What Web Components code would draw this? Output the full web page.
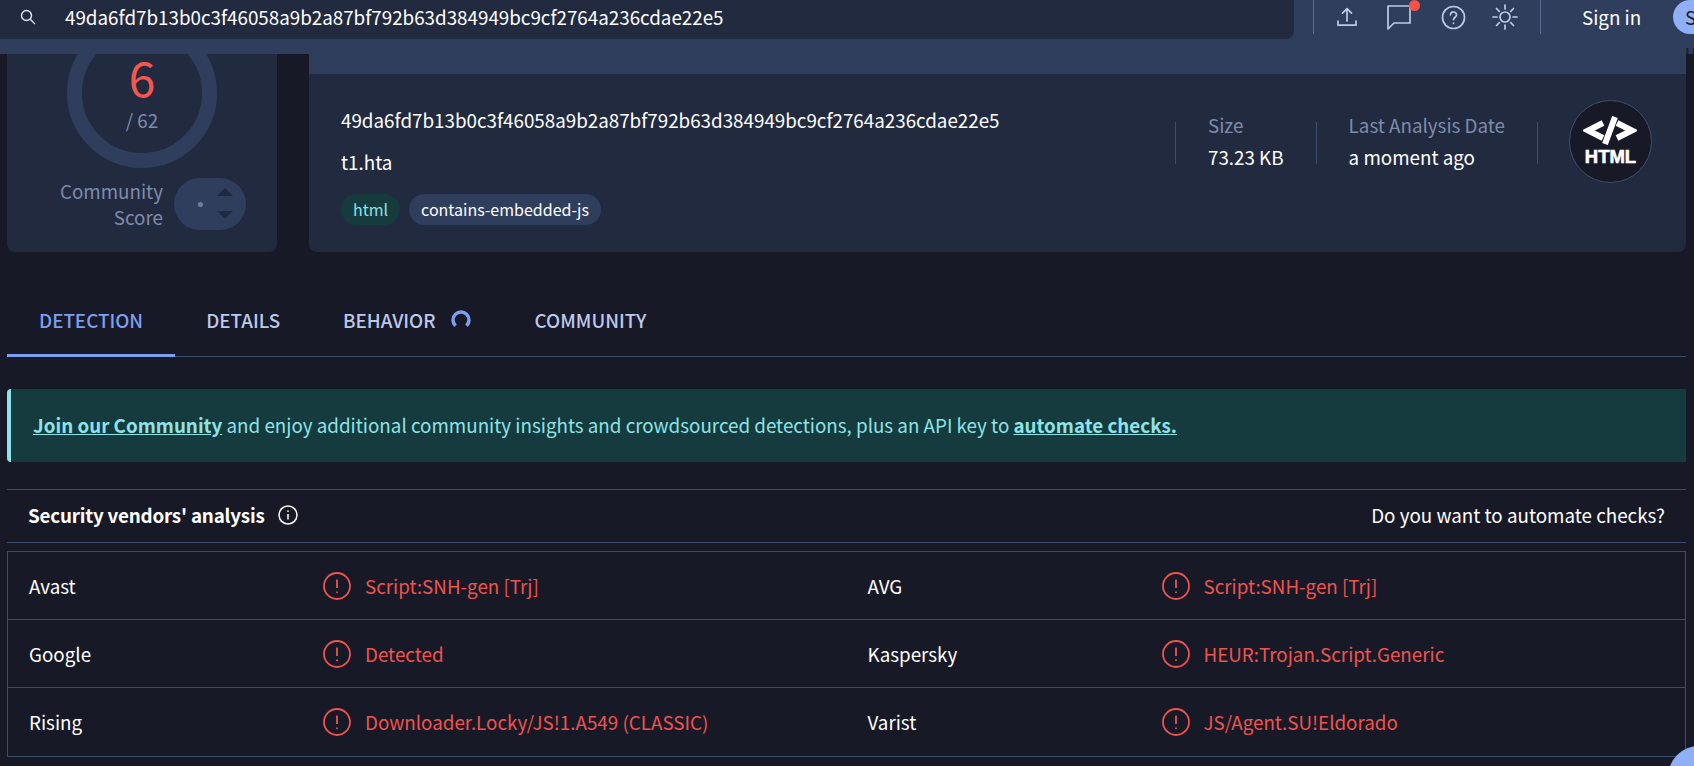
<!DOCTYPE html>
<html>
<head>
<meta charset="utf-8">
<title>VirusTotal</title>
<style>
    html, body {
        margin: 0;
        height: 766px;
        overflow: hidden;
        background: #181926;
        color: #fff;
        font-family: "Noto Sans CJK SC", "Noto Sans", sans-serif;
        font-size: 18.8px;
        line-height: 24px;
    }
    main {
        display: block;
        padding: 0 8px 0 7px;
    }
</style>
</head>
<body>
<vt-header hash="49da6fd7b13b0c3f46058a9b2a87bf792b63d384949bc9cf2764a236cdae22e5"></vt-header>
<main>
    <vt-summary>
        <vt-score slot="score" positives="6" total="62"></vt-score>
        <vt-file slot="file" hash="49da6fd7b13b0c3f46058a9b2a87bf792b63d384949bc9cf2764a236cdae22e5" name="t1.hta">
            <vt-tag kind="type">html</vt-tag>
            <vt-tag>contains-embedded-js</vt-tag>
        </vt-file>
    </vt-summary>
    <vt-tabs></vt-tabs>
    <vt-banner>
        <a href="#">Join our Community</a> and enjoy additional community insights and crowdsourced detections, plus an API key to <a href="#">automate checks.</a>
    </vt-banner>
    <vt-vendors>
        <vt-row>
            <vt-cell vendor="Avast">Script:SNH-gen [Trj]</vt-cell>
            <vt-cell vendor="AVG">Script:SNH-gen [Trj]</vt-cell>
        </vt-row>
        <vt-row>
            <vt-cell vendor="Google">Detected</vt-cell>
            <vt-cell vendor="Kaspersky">HEUR:Trojan.Script.Generic</vt-cell>
        </vt-row>
        <vt-row>
            <vt-cell vendor="Rising">Downloader.Locky/JS!1.A549 (CLASSIC)</vt-cell>
            <vt-cell vendor="Varist">JS/Agent.SU!Eldorado</vt-cell>
        </vt-row>
    </vt-vendors>
</main>
<vt-fab></vt-fab>

<script>
class VtHeader extends HTMLElement {
    constructor() {
        super()
        this.attachShadow({mode: 'open'}).innerHTML = `
<style>
    :host { display: flex; height: 54px; background: #2f3e5c; align-items: flex-start; overflow: hidden; }
    .search {
        width: 1294px; height: 39px; box-sizing: border-box; flex: none;
        background: #222a40; border-radius: 0 0 8px 0;
        display: flex; align-items: center; padding: 0 0 6px 19px;
    }
    .search svg { margin-right: 28px; }
    .sep { width: 1px; height: 34px; background: #5a6a8f; flex: none; }
    .icons { display: flex; align-items: center; height: 34px; margin-left: 21px; width: 205px; gap: 27px; flex: none; }
    .icons svg { fill: none; stroke: #bccae8; stroke-width: 1.7; flex: none; stroke-linecap: round; stroke-linejoin: round; }
    .icons svg.sun { margin-left: -2px; }
    .sign { margin-left: 41px; width: 91px; height: 33px; line-height: 33px; flex: none; }
    .join {
        width: 60px; height: 34px; flex: none; box-sizing: border-box; padding-left: 12px;
        background: #8fb0f7; color: #181926; border-radius: 17px 0 0 17px; line-height: 34px;
    }
    .badge { position: relative; display: flex; }
    .dot { position: absolute; top: -3px; right: -6px; width: 11px; height: 11px; border-radius: 50%; background: #f4524b; }
</style>
<div class="search">
    <svg width="18" height="18" viewBox="0 0 18 18" fill="none" stroke="#dfe6f5" stroke-width="1.4"><circle cx="7.5" cy="7.5" r="5"/><path d="M11.3 11.3l4.6 4.6"/></svg>
    <span id="hash"></span>
</div>
<div class="sep" style="margin-left:19px"></div>
<div class="icons">
    <svg width="24" height="24" viewBox="0 0 24 24"><path d="M12 16V4M7.5 8.2L12 3.6l4.500 4.600M3 16v4.200h18V16"/></svg>
    <span class="badge">
        <svg width="28" height="28" viewBox="0 0 28 28"><path d="M2 26V3h22v17H8z"/></svg>
        <span class="dot"></span>
    </span>
    <svg width="25" height="25" viewBox="0 0 25 25"><circle cx="12.500" cy="12.500" r="11"/><path d="M9.500 9.800c.3-4 6.200-3.600 6 .2-.1 2.200-3 2.300-3 4.600"/><path d="M12.500 18v.3"/></svg>
    <svg class="sun" width="28" height="28" viewBox="0 0 28 28"><circle cx="14" cy="14" r="5"/><path d="M14 2v4M14 22v4M2 14h4M22 14h4M5.500 5.500l2.800 2.800M19.700 19.700l2.800 2.800M5.500 22.500l2.800-2.800M19.700 8.300l2.800-2.800"/></svg>
</div>
<div class="sep"></div>
<div class="sign">Sign in</div>
<div class="join">Sign up</div>
`
        this.shadowRoot.getElementById('hash').textContent = this.getAttribute('hash')
    }
}

class VtSummary extends HTMLElement {
    constructor() {
        super()
        this.attachShadow({mode: 'open'}).innerHTML = `
<style>
    :host { display: flex; gap: 32px; height: 198px; }
    ::slotted([slot=score]) { width: 270px; flex: none; }
    ::slotted([slot=file]) { flex: 1; }
</style>
<slot name="score"></slot>
<slot name="file"></slot>
`
    }
}

class VtScore extends HTMLElement {
    constructor() {
        super()
        this.attachShadow({mode: 'open'}).innerHTML = `
<style>
    :host {
        display: block; height: 198px; overflow: hidden; background: #222a40;
        border-radius: 0 0 8px 8px; box-sizing: border-box;
    }
    .gauge {
        width: 150px; height: 150px; box-sizing: border-box; border: 15px solid #2f3e5c; border-radius: 50%;
        margin: -36px 0 0 60px; text-align: center;
    }
    .pos { color: #f4574d; font-size: 48px; line-height: 40px; margin-top: 23px; }
    .total { color: #7d8cab; line-height: 24px; margin-top: 12px; }
    .community { display: flex; gap: 11px; margin-top: 10px; align-items: center; }
    .label { width: 156px; text-align: right; color: #7d8cab; line-height: 26px; padding: 0 0 0 20px; box-sizing: border-box; }
    .pill {
        width: 72px; height: 52px; border-radius: 26px; background: #2f3e5c; position: relative; flex: none;
    }
    .pill i { position: absolute; left: 24px; top: 24px; width: 5px; height: 5px; border-radius: 50%; background: #6f7e9e; }
    .pill svg { position: absolute; left: 43px; top: 10px; }
</style>
<div class="gauge">
    <div class="pos" id="pos"></div>
    <div class="total" id="total"></div>
</div>
<div class="community">
    <div class="label">Community Score</div>
    <div class="pill"><i></i>
        <svg width="16" height="32" viewBox="0 0 16 32" fill="#1f2a42"><path d="M8 0l8 8H0zM0 23h16l-8 8z"/></svg>
    </div>
</div>
`
        this.shadowRoot.getElementById('pos').textContent = this.getAttribute('positives')
        this.shadowRoot.getElementById('total').textContent = '/ ' + this.getAttribute('total')
    }
}

class VtFile extends HTMLElement {
    constructor() {
        super()
        this.attachShadow({mode: 'open'}).innerHTML = `
<style>
    :host { display: block; height: 198px; }
    .strip { height: 20px; background: #2f3e5c; }
    .body {
        height: 178px; background: #222a40; border-radius: 0 0 8px 8px; box-sizing: border-box;
        display: flex; align-items: flex-start; padding: 34px 0 0 32px;
    }
    .info { width: 834px; flex: none; }
    .name { margin-top: 18px; }
    .tags { display: flex; gap: 9px; margin-top: 20px; }
    .sep { width: 1px; height: 42px; background: #3f4d6c; flex: none; margin-top: 14px; }
    .stat { flex: none; margin-top: 5px; padding: 0 32px; }
    .stat b { display: block; font-weight: 400; color: #7d8cab; }
    .stat span { display: block; margin-top: 8px; }
    .logo {
        width: 83px; height: 83px; border-radius: 50%; background: #181926; border: 1px solid #3f4d6c;
        box-sizing: border-box; margin: -8px 0 0 31px; flex: none; text-align: center;
    }
    .logo svg { display: block; margin: 15px auto 0; fill: none; stroke: #fff; stroke-width: 6; }
    .logo span { display: block; font: 700 18.500px/17px "Liberation Sans", sans-serif; margin-top: 3px; -webkit-text-stroke: .6px #fff; }
</style>
<div class="strip"></div>
<div class="body">
    <div class="info">
        <div class="hash" id="hash"></div>
        <div class="name" id="name"></div>
        <div class="tags"><slot></slot></div>
    </div>
    <div class="sep"></div>
    <div class="stat"><b>Size</b><span>73.23 KB</span></div>
    <div class="sep"></div>
    <div class="stat"><b>Last Analysis Date</b><span>a moment ago</span></div>
    <div class="sep"></div>
    <div class="logo">
        <svg width="54" height="29" viewBox="0 0 54 29"><path d="M20 7L5 14.500l15 7.500M34 7l15 7.500-15 7.500M32 1l-10 27"/></svg>
        <span>HTML</span>
    </div>
</div>
`
        this.shadowRoot.getElementById('hash').textContent = this.getAttribute('hash')
        this.shadowRoot.getElementById('name').textContent = this.getAttribute('name')
    }
}

class VtTag extends HTMLElement {
    constructor() {
        super()
        this.attachShadow({mode: 'open'}).innerHTML = `
<style>
    :host {
        display: block; height: 31px; line-height: 30px; padding: 0 12px; border-radius: 16px;
        background: #2f3e5c; color: #fff; font-size: 16px;
    }
    :host([kind=type]) { background: #153b3f; color: #8ee3e6; }
</style>
<slot></slot>
`
    }
}

class VtTabs extends HTMLElement {
    constructor() {
        super()
        this.attachShadow({mode: 'open'}).innerHTML = `
<style>
    :host { display: flex; height: 105px; box-sizing: border-box; border-bottom: 1px solid #3f4d6c; align-items: flex-end; }
    .tab {
        height: 105px; box-sizing: border-box; padding: 56px 32px 0 31px; margin-bottom: -1px;
        color: #bcc9ec; font-weight: 500; line-height: 24px;
        display: flex; gap: 14px; flex: none;
    }
    .tab.on { color: #7d9ff0; border-bottom: 3px solid #7d9ff0; padding-left: 32px; }
    svg { margin-top: 1px; flex: none; }
</style>
<div class="tab on">DETECTION</div>
<div class="tab">DETAILS</div>
<div class="tab">BEHAVIOR
    <svg width="22" height="22" viewBox="0 0 22 22" fill="none" stroke="#7d9ff0" stroke-width="3.500"><path d="M5.500 16.800A8 8 0 1 1 16.500 16.800"/></svg>
</div>
<div class="tab">COMMUNITY</div>
`
    }
}

class VtBanner extends HTMLElement {
    constructor() {
        super()
        this.attachShadow({mode: 'open'}).innerHTML = `
<style>
    :host {
        display: block; height: 73px; margin-top: 32px; box-sizing: border-box;
        background: #153b3f; color: #8ee3e6; border-left: 4px solid #8ee3e6; border-radius: 4px 0 0 4px;
        padding-left: 22px; line-height: 72px;
    }
    ::slotted(a) { color: #8ee3e6; font-weight: 700; text-decoration: underline; }
</style>
<slot></slot>
`
    }
}

class VtVendors extends HTMLElement {
    constructor() {
        super()
        this.attachShadow({mode: 'open'}).innerHTML = `
<style>
    :host { display: block; margin-top: 27px; }
    .head {
        display: flex; justify-content: space-between; align-items: center; height: 54px; box-sizing: border-box;
        border-top: 1px solid #3f4d6c; border-bottom: 1px solid #3f4d6c; padding: 0 21px 2px;
    }
    .title { display: flex; align-items: center; gap: 13px; font-weight: 700; letter-spacing: -.2px; }
    .table { margin-top: 8px; border: 1px solid #3f4d6c; border-bottom: 0; }
</style>
<div class="head">
    <div class="title">Security vendors' analysis
        <svg width="20" height="20" viewBox="0 0 20 20" fill="none" stroke="#fff" stroke-width="1.500"><circle cx="10" cy="10" r="9"/><path d="M10 9v5.500M10 5.500v1.500"/></svg>
    </div>
    <div>Do you want to automate checks?</div>
</div>
<div class="table"><slot></slot></div>
`
    }
}

class VtRow extends HTMLElement {
    constructor() {
        super()
        this.attachShadow({mode: 'open'}).innerHTML = `
<style>
    :host { display: grid; grid-template-columns: 838.500px 1fr; height: 68.200px; box-sizing: border-box; border-bottom: 1px solid #3f4d6c; }
</style>
<slot></slot>
`
    }
}

class VtCell extends HTMLElement {
    constructor() {
        super()
        this.attachShadow({mode: 'open'}).innerHTML = `
<style>
    :host { display: flex; align-items: center; padding-left: 21px; }
    .vendor { width: 294px; flex: none; }
    .result { display: flex; align-items: center; gap: 14px; color: #ef5350; }
    svg { fill: none; stroke: #ef5350; stroke-width: 1.800; flex: none; }
</style>
<div class="vendor" id="vendor"></div>
<div class="result">
    <svg width="28" height="28" viewBox="0 0 28 28"><circle cx="14" cy="14" r="13"/><path d="M14 7.500v8.500M14 19.500v1.500"/></svg>
    <span><slot></slot></span>
</div>
`
        this.shadowRoot.getElementById('vendor').textContent = this.getAttribute('vendor')
    }
}

// floating chat button, sits over the table corner
class VtFab extends HTMLElement {
    constructor() {
        super()
        this.attachShadow({mode: 'open'}).innerHTML = `
<style>
    :host {
        position: fixed; left: 1668px; top: 746px; width: 62px; height: 62px;
        border-radius: 50%; background: #8fb0f7; display: block;
    }
</style>
`
    }
}

customElements.define('vt-header', VtHeader)
customElements.define('vt-summary', VtSummary)
customElements.define('vt-score', VtScore)
customElements.define('vt-file', VtFile)
customElements.define('vt-tag', VtTag)
customElements.define('vt-tabs', VtTabs)
customElements.define('vt-banner', VtBanner)
customElements.define('vt-vendors', VtVendors)
customElements.define('vt-row', VtRow)
customElements.define('vt-cell', VtCell)
customElements.define('vt-fab', VtFab)
</script>
</body>
</html>
